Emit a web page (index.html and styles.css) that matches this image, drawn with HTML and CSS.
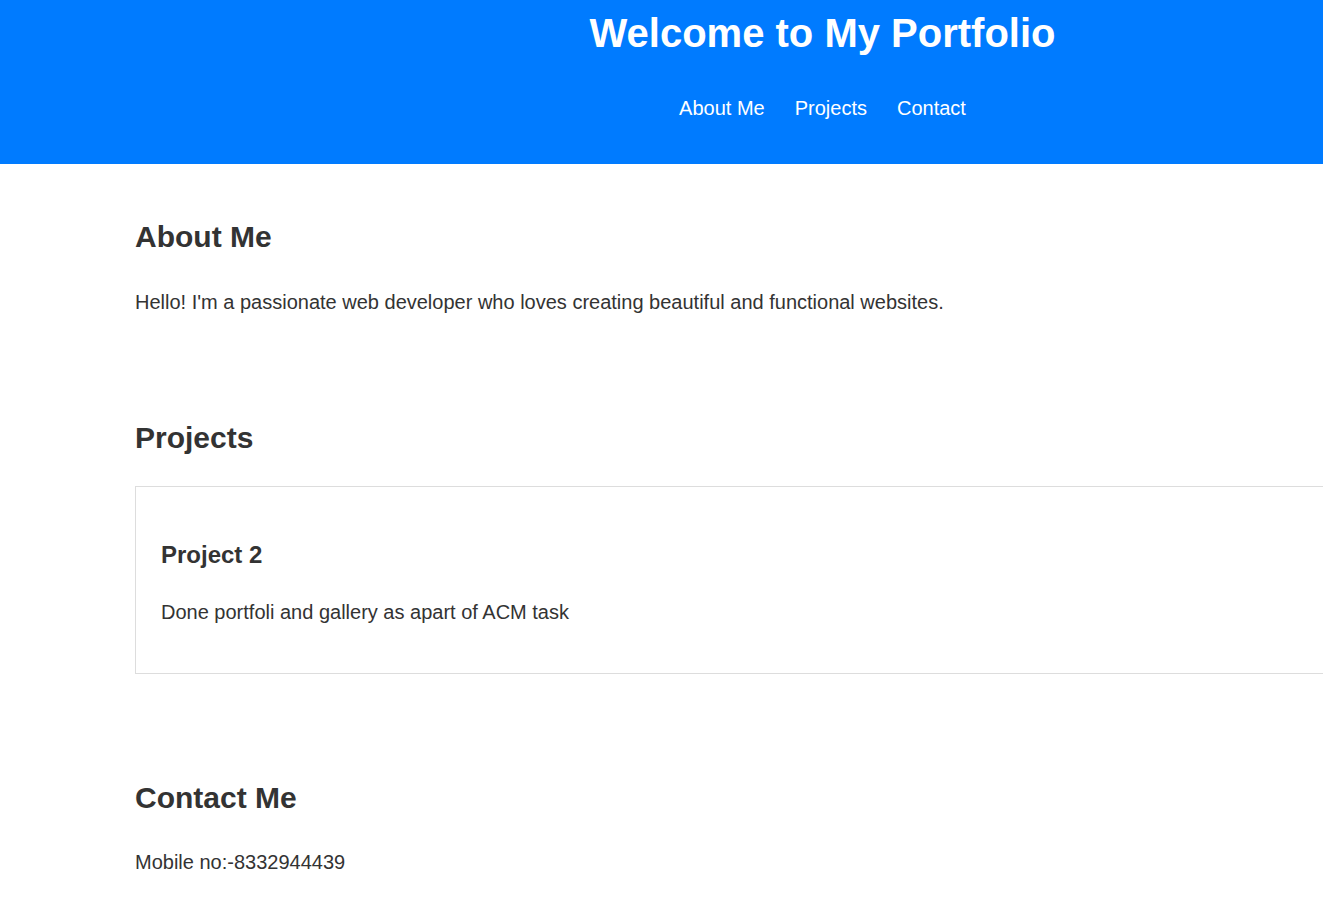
FILE: index.html
```html
<!DOCTYPE html>
<html lang="en">
<head>
<meta charset="utf-8">
<title>My Portfolio</title>
<link rel="stylesheet" href="styles.css">
</head>
<body>
<div class="page">
  <header class="site-header">
    <h1 class="site-title">Welcome to My Portfolio</h1>
    <nav class="site-nav">
      <a href="#about" class="nav-link">About Me</a>
      <a href="#projects" class="nav-link">Projects</a>
      <a href="#contact" class="nav-link">Contact</a>
    </nav>
  </header>
  <main class="content">
    <section id="about" class="section">
      <h2 class="section-title">About Me</h2>
      <p class="text">Hello! I'm a passionate web developer who loves creating beautiful and functional websites.</p>
    </section>
    <section id="projects" class="section section--projects">
      <h2 class="section-title">Projects</h2>
      <div class="project-card">
        <h3 class="project-title">Project 2</h3>
        <p class="text">Done portfoli and gallery as apart of ACM task</p>
      </div>
    </section>
    <section id="contact" class="section section--contact">
      <h2 class="section-title">Contact Me</h2>
      <p class="text">Mobile no:-8332944439</p>
    </section>
  </main>
</div>
</body>
</html>
```
FILE: styles.css
```css
html, body {
  margin: 0;
  padding: 0;
}

body {
  font-family: "Liberation Sans", Arial, sans-serif;
  color: #333;
  background: #fff;
  overflow-x: hidden;
}

.page {
  width: 1645px;
}

.site-header {
  background: #007bff;
  color: #fff;
  padding: 11px 0 44px;
  text-align: center;
}

.site-title {
  margin: 0 0 41px;
  font-size: 40px;
  font-weight: bold;
  line-height: normal;
}

.site-nav {
  display: flex;
  justify-content: center;
  gap: 30px;
  font-size: 20px;
  line-height: normal;
}

.nav-link {
  color: #fff;
  text-decoration: none;
}

.content {
  display: flex;
  flex-direction: column;
  gap: 107px;
  padding: 56px 135px 10px;
}

.section {
  display: flex;
  flex-direction: column;
  gap: 37px;
}

.section--projects {
  gap: 31px;
}

.section--contact {
  gap: 36px;
}

.section-title {
  margin: 0;
  font-size: 30px;
  font-weight: bold;
  line-height: normal;
}

.text {
  margin: 0;
  font-size: 20px;
  line-height: normal;
}

.project-card {
  border: 1px solid #ddd;
  padding: 54px 25px 49px;
  display: flex;
  flex-direction: column;
  gap: 32px;
}

.project-title {
  margin: 0;
  font-size: 24px;
  font-weight: bold;
  line-height: normal;
}
```
